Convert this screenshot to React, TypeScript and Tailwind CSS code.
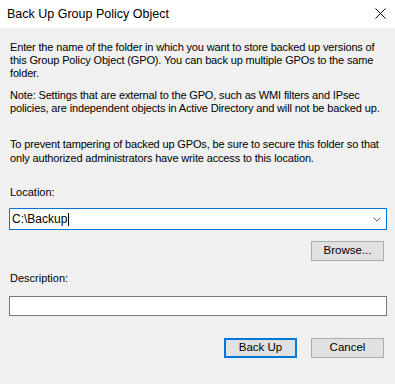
import React from "react";

const font = { fontFamily: '"Liberation Sans", Arial, sans-serif' };

const Button: React.FC<{ label: string; primary?: boolean }> = ({ label, primary }) => (
  <button
    className={
      primary
        ? "w-[73px] h-[20px] bg-[#e1e1e1] border-2 border-[#0078d7] text-[11.5px] text-black leading-none flex items-center justify-center"
        : "w-[73px] h-[20px] bg-[#e1e1e1] border border-[#adadad] text-[11.5px] text-black leading-none flex items-center justify-center"
    }
  >
    {label}
  </button>
);

export default function App() {
  return (
    <div className="w-[395px] h-[384px] bg-[#f0f0f0] flex flex-col text-black overflow-hidden" style={font}>
      {/* Title bar */}
      <div className="h-[28px] bg-white flex items-center justify-between pl-[7px] pr-[9px] shrink-0">
        <span className="text-[12.5px] leading-none">Back Up Group Policy Object</span>
        <svg width="11" height="11" viewBox="0 0 11 11" className="mb-[1px]">
          <path d="M0.5 0.5 L10.5 10.5 M10.5 0.5 L0.5 10.5" stroke="#000" strokeWidth="1" />
        </svg>
      </div>

      <div className="flex flex-col pl-[10px] pr-[9px] pt-[13px] text-[11px] leading-[13px]">
        <p className="tracking-[-0.15px]">
          Enter the name of the folder in which you want to store backed up versions of this Group Policy
          Object (GPO). You can back up multiple GPOs to the same folder.
        </p>
        <p className="mt-[9px] tracking-[-0.15px]">
          Note: Settings that are external to the GPO, such as WMI filters and IPsec policies, are independent
          objects in Active Directory and will not be backed up.
        </p>
        <p className="mt-[22px] tracking-[-0.15px] leading-[14px]">
          To prevent tampering of backed up GPOs, be sure to secure this folder so that only authorized
          administrators have write access to this location.
        </p>

        <label className="mt-[21px]">Location:</label>
        <div className="mt-[9px] -ml-[1px] -mr-[1px] h-[22px] bg-white border border-[#0078d7] flex items-center pl-[2px] pr-[5px]">
          <span className="text-[12px] leading-none">C:\Backup</span>
          <span className="w-[1px] h-[13px] bg-black ml-[1px]" />
          <div className="flex-1" />
          <svg width="8" height="5" viewBox="0 0 8 5">
            <path d="M0.5 0.5 L4 4 L7.5 0.5" stroke="#606060" strokeWidth="1" fill="none" />
          </svg>
        </div>
        <div className="mt-[11px] flex justify-end pr-[2px]">
          <Button label="Browse..." />
        </div>

        <label className="mt-[11px]">Description:</label>
        <div className="mt-[11px] -ml-[1px] -mr-[1px] h-[20px] bg-white border border-[#7a7a7a]" />

        <div className="mt-[22px] flex justify-end gap-[14px] pr-[2px]">
          <Button label="Back Up" primary />
          <Button label="Cancel" />
        </div>
      </div>
    </div>
  );
}
